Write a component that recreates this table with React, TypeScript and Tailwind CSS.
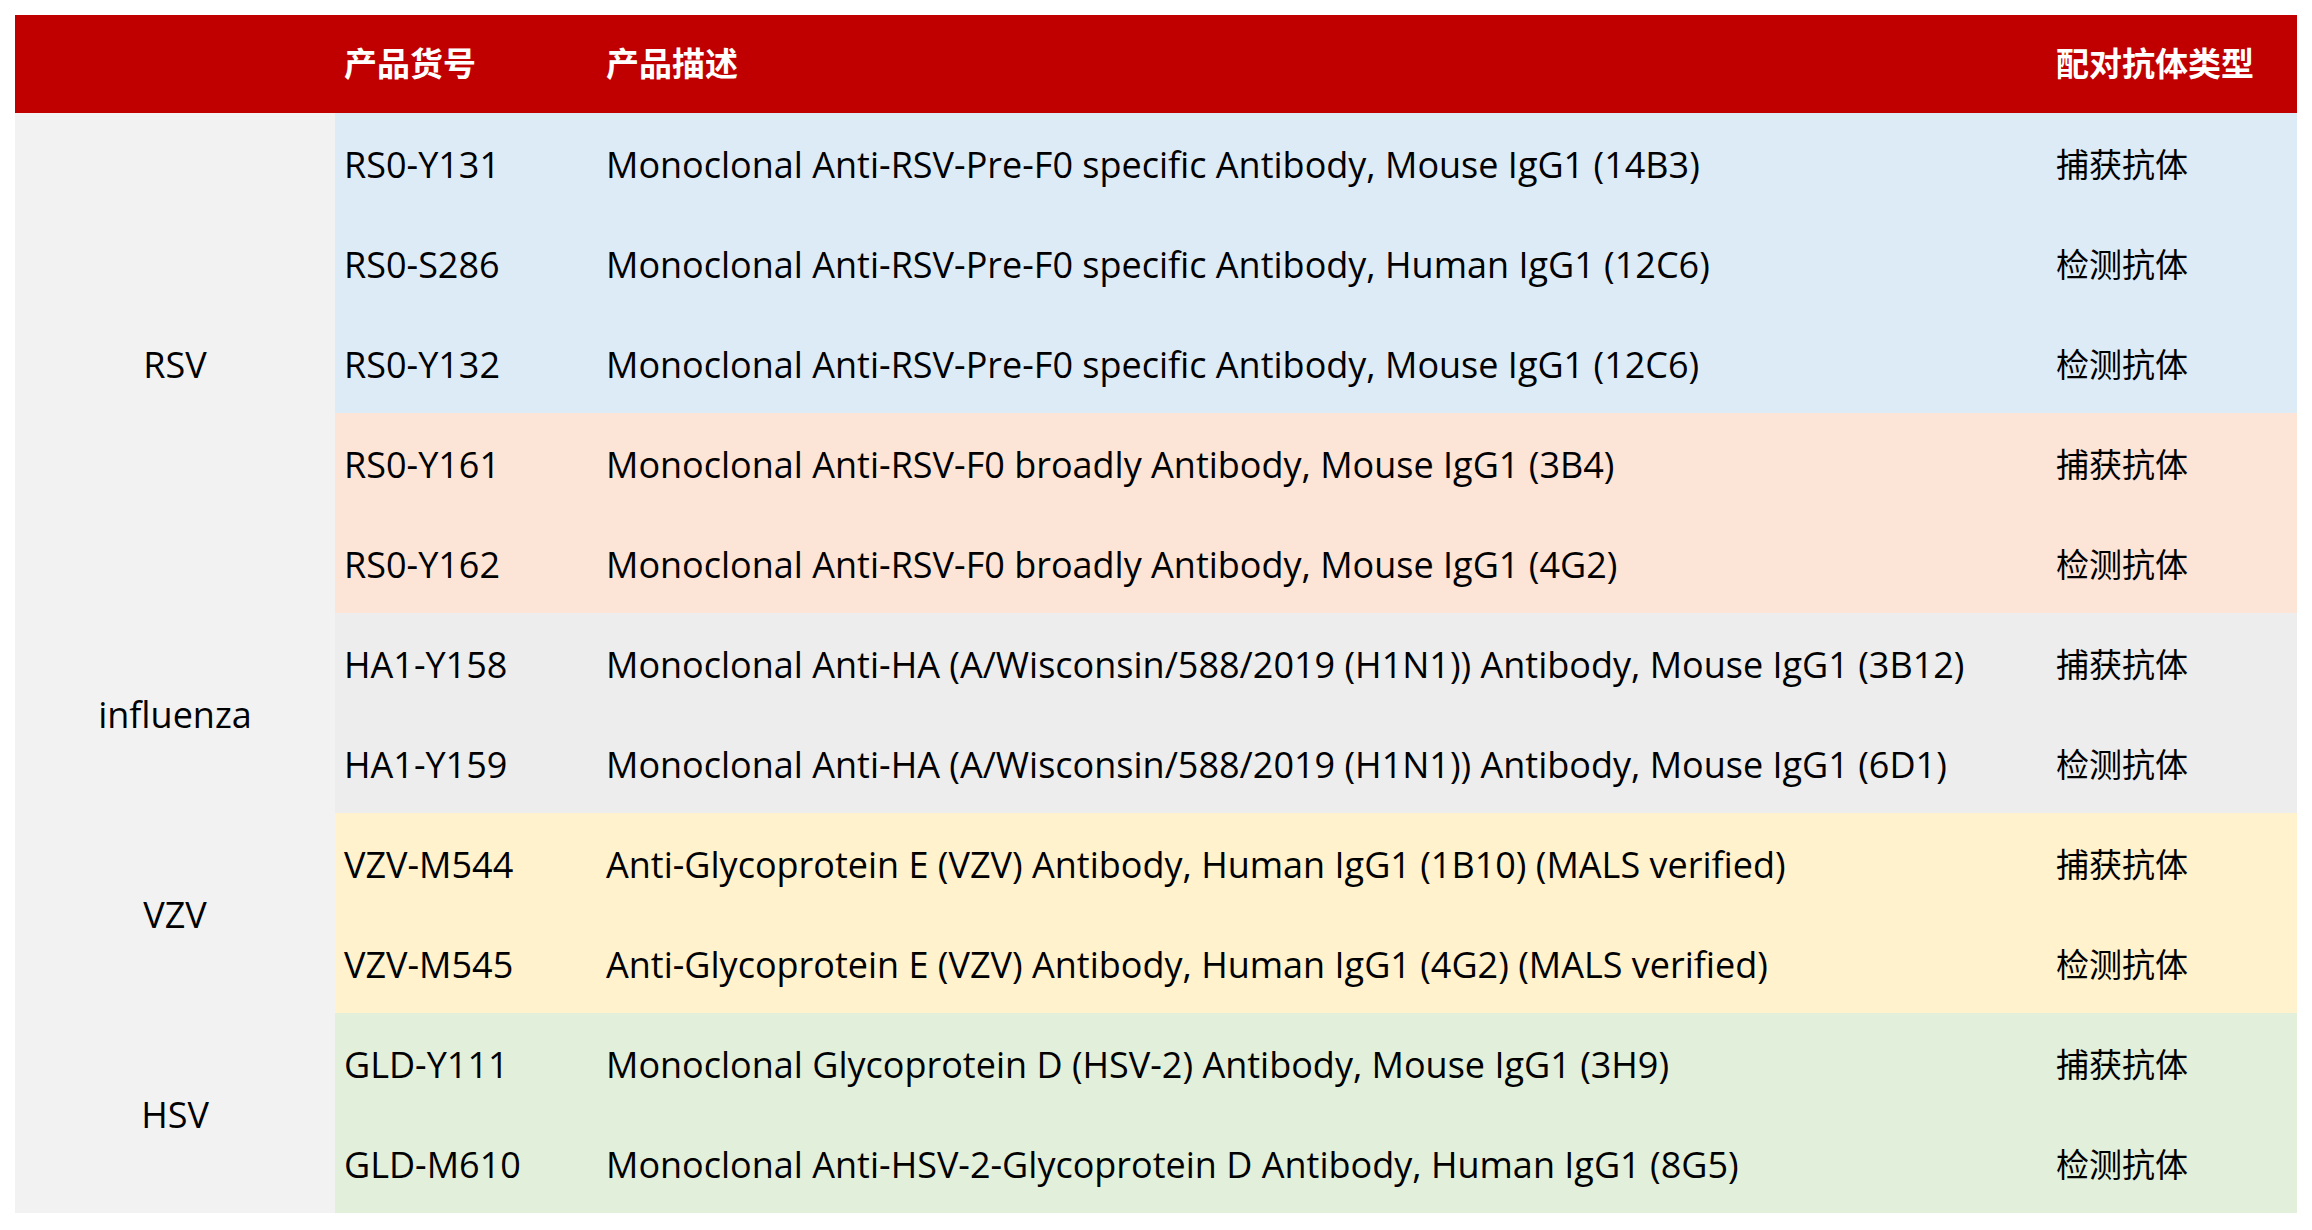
const groups = [
  {
    label: "RSV",
    rows: [
      { code: "RS0-Y131", desc: "Monoclonal Anti-RSV-Pre-F0 specific Antibody, Mouse IgG1 (14B3)", type: "捕获抗体", bg: "bg-[#DDEBF7]" },
      { code: "RS0-S286", desc: "Monoclonal Anti-RSV-Pre-F0 specific Antibody, Human IgG1 (12C6)", type: "检测抗体", bg: "bg-[#DDEBF7]" },
      { code: "RS0-Y132", desc: "Monoclonal Anti-RSV-Pre-F0 specific Antibody, Mouse IgG1 (12C6)", type: "检测抗体", bg: "bg-[#DDEBF7]" },
      { code: "RS0-Y161", desc: "Monoclonal Anti-RSV-F0 broadly Antibody, Mouse IgG1 (3B4)", type: "捕获抗体", bg: "bg-[#FCE4D6]" },
      { code: "RS0-Y162", desc: "Monoclonal Anti-RSV-F0 broadly Antibody, Mouse IgG1 (4G2)", type: "检测抗体", bg: "bg-[#FCE4D6]" },
    ],
  },
  {
    label: "influenza",
    rows: [
      { code: "HA1-Y158", desc: "Monoclonal Anti-HA (A/Wisconsin/588/2019 (H1N1)) Antibody, Mouse IgG1 (3B12)", type: "捕获抗体", bg: "bg-[#EDEDED]" },
      { code: "HA1-Y159", desc: "Monoclonal Anti-HA (A/Wisconsin/588/2019 (H1N1)) Antibody, Mouse IgG1 (6D1)", type: "检测抗体", bg: "bg-[#EDEDED]" },
    ],
  },
  {
    label: "VZV",
    rows: [
      { code: "VZV-M544", desc: "Anti-Glycoprotein E (VZV) Antibody, Human IgG1 (1B10) (MALS verified)", type: "捕获抗体", bg: "bg-[#FFF2CC]" },
      { code: "VZV-M545", desc: "Anti-Glycoprotein E (VZV) Antibody, Human IgG1 (4G2) (MALS verified)", type: "检测抗体", bg: "bg-[#FFF2CC]" },
    ],
  },
  {
    label: "HSV",
    rows: [
      { code: "GLD-Y111", desc: "Monoclonal Glycoprotein D (HSV-2) Antibody, Mouse IgG1 (3H9)", type: "捕获抗体", bg: "bg-[#E2EFDA]" },
      { code: "GLD-M610", desc: "Monoclonal Anti-HSV-2-Glycoprotein D Antibody, Human IgG1 (8G5)", type: "检测抗体", bg: "bg-[#E2EFDA]" },
    ],
  },
];

export default function App() {
  return (
    <div
      className="min-h-screen bg-white p-[15px] text-[33px] text-black"
      style={{ fontFamily: '"Open Sans", "Noto Sans CJK SC", sans-serif' }}
    >
      {/* Header */}
      <div className="flex h-[98px] items-center bg-[#C00000] font-bold text-white">
        <div className="w-[320px]" />
        <div className="w-[262px] pl-[9px]">产品货号</div>
        <div className="flex-1 pl-[9px]">产品描述</div>
        <div className="w-[250px] pl-[9px]">配对抗体类型</div>
      </div>

      {/* Body */}
      <div className="bg-[#F2F2F2]">
        {groups.map((g) => (
          <div key={g.label} className="flex">
            <div className="flex w-[320px] items-center justify-center pt-[3px] text-[36px]">{g.label}</div>
            <div className="flex-1">
              {g.rows.map((r) => (
                <div key={r.code} className={`flex h-[100px] items-center pt-[3px] ${r.bg}`}>
                  <div className="w-[262px] pl-[9px] text-[36px]">{r.code}</div>
                  <div className="flex-1 pl-[9px] text-[36px]">{r.desc}</div>
                  <div className="w-[250px] pl-[9px]">{r.type}</div>
                </div>
              ))}
            </div>
          </div>
        ))}
      </div>
    </div>
  );
}
